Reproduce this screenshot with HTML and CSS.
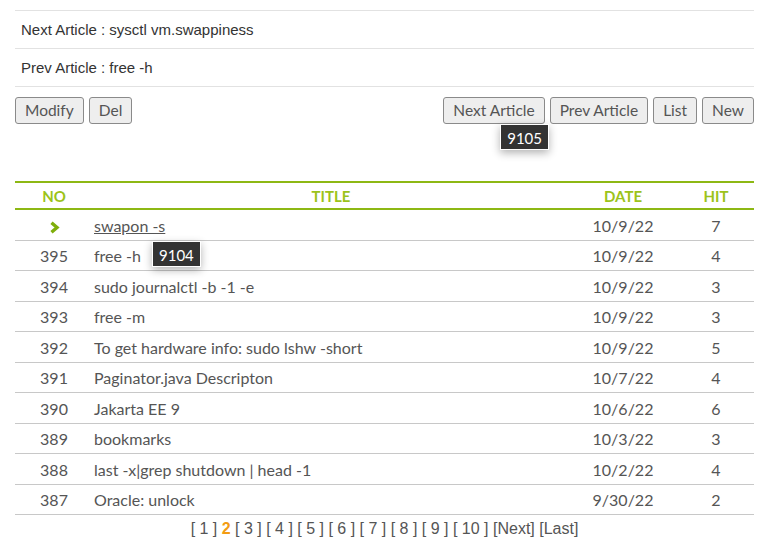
FILE: index.html
```html
<!DOCTYPE html>
<html>
<head>
<meta charset="utf-8">
<link rel="stylesheet" href="styles.css">
</head>
<body>
<div class="wrap">
  <div class="nav-list">
    <div class="nav-row">Next Article : sysctl vm.swappiness</div>
    <div class="nav-row">Prev Article : free -h</div>
  </div>
  <div class="btn-bar">
    <div class="btn-group">
      <button class="btn">Modify</button>
      <button class="btn">Del</button>
    </div>
    <div class="btn-group right">
      <button class="btn">Next Article</button>
      <button class="btn">Prev Article</button>
      <button class="btn">List</button>
      <button class="btn">New</button>
      <span class="tip tip-top">9105</span>
    </div>
  </div>
  <table class="board">
    <thead>
      <tr><th class="c-no">NO</th><th class="c-title">TITLE</th><th class="c-date">DATE</th><th class="c-hit">HIT</th></tr>
    </thead>
    <tbody>
      <tr><td class="c-no"><svg class="chev" width="11" height="13" viewBox="0 0 11 13"><polyline points="2.5,1.8 8,6.5 2.5,11.2" fill="none" stroke="#7fae0b" stroke-width="3.4"/></svg></td><td class="c-title"><a class="cur">swapon -s</a></td><td class="c-date">10/9/22</td><td class="c-hit">7</td></tr>
      <tr><td class="c-no">395</td><td class="c-title rel">free -h<span class="tip tip-row">9104</span></td><td class="c-date">10/9/22</td><td class="c-hit">4</td></tr>
      <tr><td class="c-no">394</td><td class="c-title">sudo journalctl -b -1 -e</td><td class="c-date">10/9/22</td><td class="c-hit">3</td></tr>
      <tr><td class="c-no">393</td><td class="c-title">free -m</td><td class="c-date">10/9/22</td><td class="c-hit">3</td></tr>
      <tr><td class="c-no">392</td><td class="c-title">To get hardware info: sudo lshw -short</td><td class="c-date">10/9/22</td><td class="c-hit">5</td></tr>
      <tr><td class="c-no">391</td><td class="c-title">Paginator.java Descripton</td><td class="c-date">10/7/22</td><td class="c-hit">4</td></tr>
      <tr><td class="c-no">390</td><td class="c-title">Jakarta EE 9</td><td class="c-date">10/6/22</td><td class="c-hit">6</td></tr>
      <tr><td class="c-no">389</td><td class="c-title">bookmarks</td><td class="c-date">10/3/22</td><td class="c-hit">3</td></tr>
      <tr><td class="c-no">388</td><td class="c-title">last -x|grep shutdown | head -1</td><td class="c-date">10/2/22</td><td class="c-hit">4</td></tr>
      <tr><td class="c-no">387</td><td class="c-title">Oracle: unlock</td><td class="c-date">9/30/22</td><td class="c-hit">2</td></tr>
    </tbody>
  </table>
  <div class="paging">[ 1 ] <b class="now">2</b> [ 3 ] [ 4 ] [ 5 ] [ 6 ] [ 7 ] [ 8 ] [ 9 ] [ 10 ] [Next] [Last]</div>
</div>
</body>
</html>
```
FILE: styles.css
```css
html, body { margin: 0; padding: 0; background: #fff; }
body { font-family: "Liberation Sans", Arial, sans-serif; color: #333; }
.wrap { padding: 10px 15px 0; }
.nav-list { border-top: 1px solid #e2e2e2; }
.nav-row {
  height: 37px; line-height: 37px; border-bottom: 1px solid #e2e2e2;
  padding-left: 6px; font-size: 15px; color: #333;
}
.btn-bar { display: flex; justify-content: space-between; margin-top: 10px; }
.btn-group { display: flex; gap: 5px; position: relative; }
.btn {
  font-family: "Lato", sans-serif; font-size: 15.5px; color: #555;
  background: #eee; border: 1px solid #8a8a8a; border-radius: 3px;
  height: 27px; padding: 0 9px; margin: 0; line-height: 25px;
}
.tip {
  position: absolute; background: #333; color: #fff;
  font-family: "Lato", sans-serif; font-size: 15px;
  height: 26px; line-height: 26px; padding: 0 6px; box-sizing: border-box;
  box-shadow: 0 3px 8px rgba(0,0,0,0.3); border: 1px solid #fff;
}
.tip-top { right: 205px; top: 27px; }
.board { width: 100%; border-collapse: collapse; margin-top: 57px; font-family: "Lato", sans-serif; font-size: 16px; color: #555; }
.board thead th {
  height: 25px; border-top: 2px solid #8db814; border-bottom: 2px solid #8db814;
  color: #9cc31a; font-size: 15px; font-weight: bold; padding: 0;
}
.board td { height: 28.5px; border-bottom: 1px solid #c8c8c8; padding: 1px 0 0; }
.c-no { width: 78px; text-align: center; }
.c-title { text-align: left; padding-left: 1px !important; }
.board th.c-title { text-align: center; }
.c-date { width: 110px; text-align: center; }
.c-hit { width: 76px; text-align: center; }
.rel { position: relative; }
.tip-row { left: 59px; top: 0; }
.chev { vertical-align: middle; }
.cur { text-decoration: underline; color: #555; }
.paging { text-align: center; font-size: 16px; color: #555; margin-top: 5px; }
.paging .now { color: #f39c12; }
```
